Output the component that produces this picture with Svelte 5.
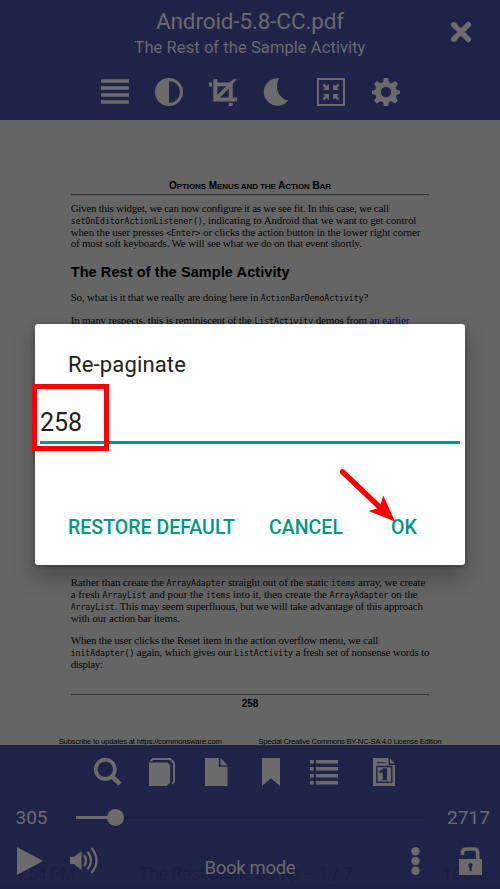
<script>
  const opening = [
    [318, 'Given this widget, we can now configure it as we see fit. In this case, we call'],
    [345.5, '`setOnEditorActionListener()`, indicating to Android that we want to get control'],
    [349.5, 'when the user presses `<Enter>` or clicks the action button in the lower right corner'],
    [291, 'of most soft keyboards. We will see what we do on that event shortly.']
  ];
  const adapter = [
    [354.5, 'Rather than create the `ArrayAdapter` straight out of the static `items` array, we create'],
    [347, 'a fresh `ArrayList` and pour the `items` into it, then create the `ArrayAdapter` on the'],
    [352, '`ArrayList`. This may seem superfluous, but we will take advantage of this approach'],
    [109, 'with our action bar items.']
  ];
  const reset = [
    [307.5, 'When the user clicks the Reset item in the action overflow menu, we call'],
    [358.5, '`initAdapter()` again, which gives our `ListActivity` a fresh set of nonsense words to'],
    [32, 'display:']
  ];

  // Spreads the letters of a line so that it fills the given measure.
  function fit(node, width) {
    const natural = node.getBoundingClientRect().width;
    let fixed = 0;
    node.querySelectorAll('code').forEach((c) => (fixed += c.textContent.length));
    const count = node.textContent.length - fixed;
    node.style.letterSpacing = (width - natural) / count + 'px';
  }
</script>

{#snippet line(width, text)}
  <div class="line"><span use:fit={width}>{#each text.split('`') as part, i}{#if i % 2}<code>{part}</code>{:else}{part}{/if}{/each}</span></div>
{/snippet}

<div class="screen">
  <header>
    <div class="title"><span use:fit={188}>Android-5.8-CC.pdf</span></div>
    <div class="subtitle"><span use:fit={231}>The Rest of the Sample Activity</span></div>
    <div class="tools top">
      <svg viewBox="0 0 28 28"><path d="M0 1.3h28v3.5H0zM0 8.3h28v3.5H0zM0 15.3h28v3.5H0zM0 22.3h28v3.5H0z" /></svg>
      <svg viewBox="0 0 28 28"><path fill-rule="evenodd" d="M14 0a14 14 0 1 0 0 28a14 14 0 1 0 0-28zM14 3.2a10.8 10.8 0 0 1 0 21.6z" /></svg>
      <svg viewBox="0 0 28 28"><path d="M0 4.5h3.2v4H0zM4.3 1h4v3.5H20L26 .2L27.6 1.6L23.8 6v13.5H28v4H4.3zM8.3 8.2v8.9L17.2 8.2zM10.8 19.5h9v-9zM19.8 24.7h4v3.3h-4z" fill-rule="evenodd" /></svg>
      <svg viewBox="0 0 28 28"><path d="M16.3 .3A13.8 13.8 0 1 0 25.3 22.6A14.6 14.6 0 0 1 16.3 .3z" /></svg>
      <svg viewBox="0 0 28 28"><path d="M1 1h26v26H1z" fill="none" stroke="currentColor" stroke-width="2" /><path d="M12 6v6H6l2-2l-2.4-2.5l1.8-1.8L9.9 8zM16 6v6h6l-2-2l2.4-2.5l-1.8-1.8L18.1 8zM12 22v-6H6l2 2l-2.4 2.5l1.8 1.8L9.9 20zM16 22v-6h6l-2 2l2.4 2.5l-1.8 1.8L18.1 20z" /></svg>
      <svg viewBox="0 0 28 28"><path fill-rule="evenodd" d="M12 0h4l1 4.3l2.4 1L23.2 3l2.8 2.8l-2.3 3.8l1 2.4l3.3 .7v3.2l-3.3 .8l-1 2.5l2.2 3.4l-2.8 2.8l-3.7-2.1l-2.4 1L16 28h-4l-1-3.7l-2.4-1l-3.8 2.1L2 22.6l2.3-3.4l-1-2.5L0 15.9v-3.2l3.3-.7l1-2.4L2 5.8L4.8 3l3.8 2.3l2.4-1zM14 8.8a5.2 5.2 0 1 0 0 10.4a5.2 5.2 0 1 0 0-10.4z" /></svg>
    </div>
    <svg class="close" viewBox="0 0 22 22"><path d="M3.6 3.6L18.4 18.4M18.4 3.6L3.6 18.4" stroke="currentColor" stroke-width="5.4" /><path d="M3.6 3.6L4.5 4.5M18.4 3.6L17.5 4.5M3.6 18.4L4.5 17.5M18.4 18.4L17.5 17.5" stroke="currentColor" stroke-width="5.4" stroke-linecap="round" /></svg>
  </header>

  <main>
    <div class="running"><span use:fit={162}>O<small>PTIONS</small> M<small>ENUS AND THE</small> A<small>CTION</small> B<small>AR</small></span></div>
    <div class="para first">{#each opening as [w, t]}{@render line(w, t)}{/each}</div>
    <h2><span use:fit={219}>The Rest of the Sample Activity</span></h2>
    <div class="para so">{@render line(297.5, 'So, what is it that we really are doing here in `ActionBarDemoActivity`?')}</div>
    <div class="para many"><div class="line"><span use:fit={338.5}>In many respects, this is reminiscent of the <code>ListActivity</code> demos from <a href="#earlier">an earlier</a></span></div></div>
    <div class="para adapter">{#each adapter as [w, t]}{@render line(w, t)}{/each}</div>
    <div class="para reset">{#each reset as [w, t]}{@render line(w, t)}{/each}</div>
    <div class="folio">258</div>
    <div class="legal"><span use:fit={163}>Subscribe to updates at https://commonsware.com</span><span use:fit={183}>Special Creative Commons BY-NC-SA 4.0 License Edition</span></div>
  </main>

  <footer>
    <div class="status"><span use:fit={60}>1:54 PM</span><span class="chapter" use:fit={213}>The Rest of the Samp – 1 / 7</span><span>100%</span></div>
    <div class="tools bottom">
      <svg viewBox="0 0 28 28"><circle cx="11.3" cy="11.3" r="9.6" fill="none" stroke="currentColor" stroke-width="3.7" /><path d="M17.8 18.3L26 26.2" stroke="currentColor" stroke-width="4.6" /></svg>
      <svg viewBox="0 0 28 28"><path d="M1 4.5h18.5l2.7 2.7V24.5l-3.7 3.5H1z" /><path d="M2.5 3L5 1h17l4 4v18.5L24.2 26" fill="none" stroke="currentColor" stroke-width="2" /></svg>
      <svg viewBox="0 0 28 28"><path d="M3 0h13.8v8.8h8.8V28H3zM18.5 0l7.1 7.2h-7.1z" /></svg>
      <svg viewBox="0 0 28 28"><path d="M5 0h18v28l-9-7.5L5 28z" /></svg>
      <svg viewBox="0 0 28 28"><path d="M0 2h3.8v3.4H0zM6 2h22v3.4H6zM0 9h3.8v3.4H0zM6 9h22v3.4H6zM0 16h3.8v3.4H0zM6 16h22v3.4H6zM0 23h3.8v3.4H0zM6 23h22v3.4H6z" /></svg>
      <svg class="page-one" viewBox="0 0 28 28"><path d="M3 0h15.5v7h6.5V28H3zM20 0.6L25 5.6h-5z" /><path d="M7 4.7h8.5" stroke="#1e2348" stroke-width="1" /><path d="M6.8 8.5h15v15.8h-15z" fill="none" stroke="#1e2348" stroke-width="1.4" /><path d="M13 10.3h4v11.9h-4.2v-8l-3.3 1.3v-2.8q2.6-.6 3.5-2.4z" fill="#1e2348" /></svg>
    </div>
    <div class="seek">
      <span use:fit={32}>305</span>
      <div class="track"><div class="done"></div><div class="thumb"></div></div>
      <span use:fit={43}>2717</span>
    </div>
    <div class="controls">
      <svg class="play" viewBox="0 0 26 28"><path d="M0 0L26 14L0 28z" /></svg>
      <svg class="sound" viewBox="0 0 28 28"><path d="M0 10h4L11.5 4v19L4 17H0z" /><path d="M14 8q4 5.5 0 11M17.5 4.5q7 9 0 18M21.5 1q10 12.5 0 25" fill="none" stroke="currentColor" stroke-width="2.3" /></svg>
      <span class="mode"><span use:fit={91}>Book mode</span></span>
      <svg class="more" viewBox="0 0 9 28"><circle cx="4.5" cy="4.3" r="4.2" /><circle cx="4.5" cy="14" r="4.2" /><circle cx="4.5" cy="23.7" r="4.2" /></svg>
      <svg class="lock" viewBox="0 0 23 28"><path d="M3.5 8V5.5Q3.5 2 7.5 2h7.5Q18.7 2 18.7 6v8" fill="none" stroke="currentColor" stroke-width="3.7" /><path fill-rule="evenodd" d="M0 12h23v16H0zM11.5 16a2.2 2.2 0 0 0-1.2 4.1V24h2.4v-3.9A2.2 2.2 0 0 0 11.5 16z" /></svg>
    </div>
  </footer>

  <section class="dialog">
    <div class="name"><span use:fit={118}>Re-paginate</span></div>
    <div class="field"><span use:fit={42}>258</span></div>
    <div class="actions">
      <span use:fit={167}>RESTORE DEFAULT</span>
      <span use:fit={74}>CANCEL</span>
      <span use:fit={26}>OK</span>
    </div>
    <div class="mark"></div>
    <svg class="arrow" viewBox="0 0 60 58"><path d="M4.5 4.8L43 41.5" stroke="#f00" stroke-width="5.4" stroke-linecap="round" /><path d="M57 54.5L30.5 44L41.5 40.8L45.3 28.5z" fill="#f00" /></svg>
  </section>
</div>

<style>
  :global(body) { margin: 0; background: #656565; }
  .screen { position: relative; width: 500px; height: 889px; overflow: hidden; display: flex; flex-direction: column; font-family: Roboto, sans-serif; color: #6b6b6b; background: #656565; white-space: nowrap; }
  span { display: inline-block; }
  svg { display: block; fill: currentColor; flex: none; overflow: visible; }
  header { position: relative; box-sizing: border-box; height: 119.5px; background: #1e2348; text-align: center; flex: none; }
  .title { font-size: 22.5px; line-height: 28px; padding-top: 7.4px; }
  .subtitle { font-size: 16.5px; line-height: 24px; padding-top: 0.6px; }
  .tools { display: flex; gap: 26.2px; }
  .tools svg { width: 28px; height: 28px; }
  .top { padding: 17.8px 0 0 100.7px; }
  .close { position: absolute; left: 450px; top: 21px; width: 22px; height: 22px; }

  main { flex: 1; min-height: 0; overflow: hidden; padding: 0 70.7px; color: #050505; font-family: "Liberation Serif", serif; font-size: 11px; }
  .running { margin-top: 58px; height: 16px; border-bottom: 1px solid #303030; text-align: center; font: bold 10px/15px "Liberation Sans", sans-serif; color: #000; }
  .running small { font-size: 8px; }
  .line { height: 11.8px; line-height: 11.8px; }
  .line code { font-family: "DejaVu Sans Mono", monospace; font-size: 8.15px; letter-spacing: 0; line-height: 0; }
  .first { padding-top: 8.5px; }
  h2 { margin: 12px 0 0; font: bold 14.5px/20px "Liberation Sans", sans-serif; color: #000; }
  .so { padding-top: 9.5px; }
  .many { padding-top: 11.4px; }
  .many a { color: #0a0a62; text-decoration: underline; }
  .adapter { padding-top: 250.5px; }
  .reset { padding-top: 11px; }
  .folio { margin-top: 23px; border-top: 1px solid #303030; font: bold 10px/18px "Liberation Sans", sans-serif; text-align: center; color: #000; }
  .legal { display: flex; justify-content: space-between; margin: 23.3px -12px 0; font: 7.7px/12px "Liberation Sans", sans-serif; color: #000; }

  footer { position: relative; box-sizing: border-box; height: 144.5px; flex: none; background: #1e2348; }
  .bottom { padding: 13.5px 0 0 94px; position: relative; }
  .page-one { margin-left: 6px; margin-right: -6px; }
  .bottom svg:nth-child(5) { margin-left: -0.5px; }
  .bottom .page-one { margin-left: -0.5px; position: relative; left: 6px; margin-right: 0; }
  .seek { display: flex; align-items: center; justify-content: space-between; height: 30px; padding: 16.5px 10px 0 15.5px; font-size: 19px; }
  .track { position: relative; width: 348px; height: 3px; background: #191d3b; margin-left: -1px; margin-right: -7px; }
  .done { width: 39px; height: 3px; background: #6b6b6b; }
  .thumb { position: absolute; left: 30.5px; top: -7px; width: 17px; height: 17px; border-radius: 50%; background: #6b6b6b; }
  .controls { position: relative; display: flex; align-items: flex-start; padding: 14.5px 18px 0 17px; }
  .play { width: 26px; height: 28px; }
  .sound { width: 28px; height: 28px; margin-left: 27px; }
  .mode { margin: 9px 0 0 106.4px; font-size: 18.5px; line-height: 24px; }
  .more { width: 9px; height: 28px; margin-left: 115.5px; }
  .lock { width: 23px; height: 28px; margin-left: auto; }
  .status { position: absolute; left: 0; right: 0; bottom: 0; height: 27px; padding: 0 14px 0 15px; display: flex; font-size: 18px; line-height: 24px; color: #1a1f40; }
  .status .chapter { margin: 0 auto 0 64px; }
  .status::after { content: ""; position: absolute; left: 0; right: 0; bottom: 0; height: 5px; background: #1a2046; }

  .dialog { position: absolute; box-sizing: border-box; left: 35px; top: 323.7px; width: 430px; height: 241.6px; padding: 27.3px 5px 0; background: #fff; border-radius: 3px; box-shadow: 0 12px 22px rgba(0, 0, 0, 0.28), 0 1px 5px rgba(0, 0, 0, 0.3); color: #212121; }
  .name { padding-left: 28px; font-size: 22px; line-height: 28px; }
  .field { height: 43px; padding-top: 18.7px; border-bottom: 3px solid #009688; font-size: 25px; line-height: 50px; box-sizing: content-box; }
  .actions { display: flex; padding: 70px 0 0 28px; color: #009688; font-size: 19.5px; font-weight: 500; line-height: 28px; }
  .actions span:nth-child(2) { margin-left: 34px; }
  .actions span:nth-child(3) { margin-left: 48px; }
  .mark { position: absolute; left: -3.5px; top: 60.3px; width: 67.5px; height: 57px; border: 5px solid #f00; }
  .arrow { position: absolute; left: 303px; top: 143.3px; width: 60px; height: 58px; }
</style>
